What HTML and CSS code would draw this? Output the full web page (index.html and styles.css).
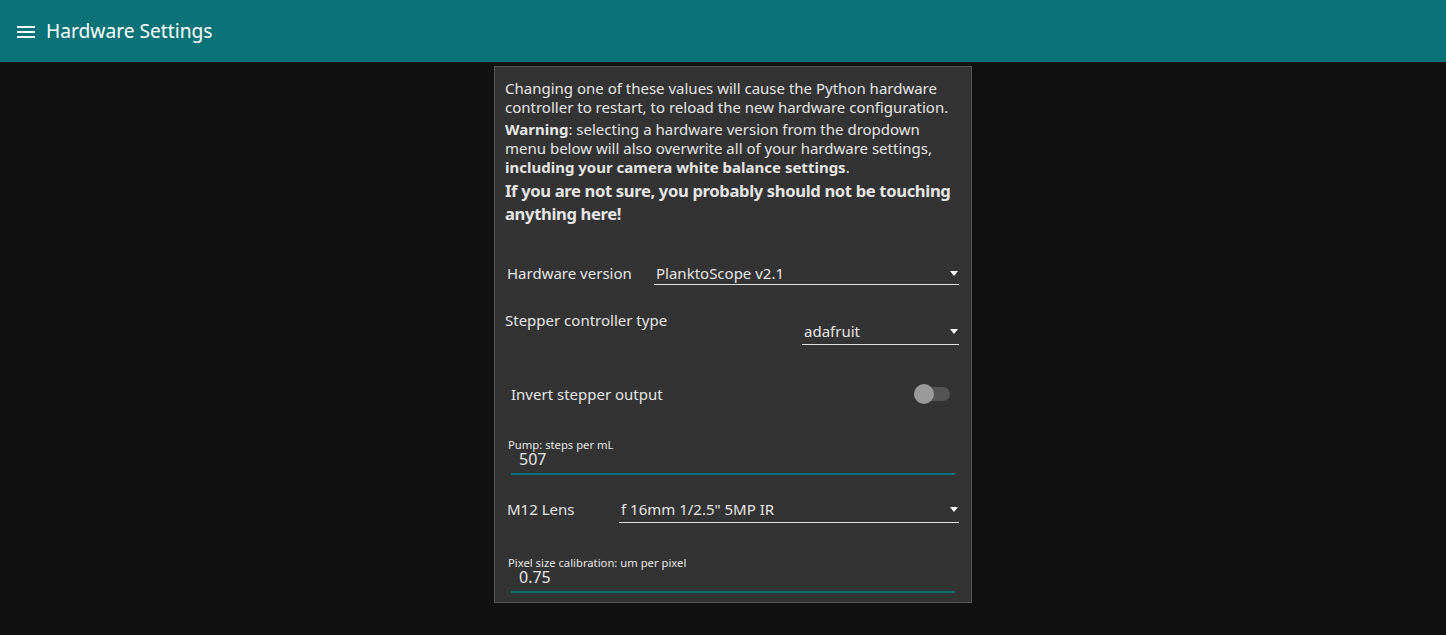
FILE: index.html
```html
<!DOCTYPE html>
<html>
<head>
<meta charset="utf-8">
<link rel="stylesheet" href="styles.css">
</head>
<body>
<header class="topbar">
  <svg class="menu-icon" width="18" height="12" viewBox="0 0 18 12"><rect x="0" y="0" width="18" height="2" fill="#fff"/><rect x="0" y="5" width="18" height="2" fill="#fff"/><rect x="0" y="10" width="18" height="2" fill="#fff"/></svg>
  <span class="title">Hardware Settings</span>
</header>
<main class="main">
  <section class="card">
    <div class="desc">
      <p class="p1">Changing one of these values will cause the Python hardware controller to restart, to reload the new hardware configuration.</p>
      <p class="p2"><b>Warning</b>: selecting a hardware version from the dropdown menu below will also overwrite all of your hardware settings, <b>including your camera white balance settings</b>.</p>
      <p class="p3">If you are not sure, you probably should not be touching anything here!</p>
    </div>

    <div class="row row-hw">
      <span class="label label-hw">Hardware version</span>
      <div class="select select-hw"><span class="sel-text">PlanktoScope v2.1</span><span class="caret"></span></div>
    </div>

    <div class="row row-stepper">
      <span class="label">Stepper controller type</span>
      <div class="select select-stepper"><span class="sel-text">adafruit</span><span class="caret"></span></div>
    </div>

    <div class="row row-invert">
      <span class="label">Invert stepper output</span>
      <span class="switch"><span class="track"></span><span class="thumb"></span></span>
    </div>

    <div class="field field-pump">
      <div class="field-label">Pump: steps per mL</div>
      <div class="field-input"><span class="field-value">507</span></div>
    </div>

    <div class="row row-lens">
      <span class="label label-hw">M12 Lens</span>
      <div class="select select-lens"><span class="sel-text">f 16mm 1/2.5" 5MP IR</span><span class="caret"></span></div>
    </div>

    <div class="field field-pixel">
      <div class="field-label">Pixel size calibration: um per pixel</div>
      <div class="field-input"><span class="field-value">0.75</span></div>
    </div>
  </section>
</main>
</body>
</html>
```

FILE: styles.css
```css
* { box-sizing: border-box; }
html, body { margin: 0; padding: 0; }
body {
  background: #111111;
  font-family: "Noto Sans", "Open Sans", sans-serif;
  color: #e6e6e6;
  height: 635px;
  overflow: hidden;
}
.topbar {
  height: 62px;
  background: #0a7378;
  display: flex;
  align-items: center;
  padding-left: 17px;
}
.menu-icon { display: block; margin-top: 1px; }
.title {
  color: #ffffff;
  font-size: 19.2px;
  margin-left: 11px;
  line-height: 24px;
}
.main {
  padding-top: 4px;
  padding-left: 494px;
}
.card {
  width: 478px;
  background: #333333;
  border: 1px solid #555555;
  padding: 12px 12px 9px 10px;
}
.desc p { margin: 0; }
.desc .p1, .desc .p2 { font-size: 15px; line-height: 19px; }
.desc .p2 { margin-top: 3px; }
.desc .p3 { font-size: 16.6px; letter-spacing: -0.35px; line-height: 23px; font-weight: bold; margin-top: 2px; }
.desc b { font-weight: bold; }

.row { display: flex; }
.label { font-size: 15px; line-height: 20px; }
.select {
  display: flex;
  align-items: center;
  border-bottom: 1px solid #e0e0e0;
  padding: 5px 1px 1px 2px;
  margin-left: auto;
  font-size: 15px;
}
.sel-text { line-height: 20px; flex: 1; }
.caret {
  width: 0; height: 0;
  border-left: 4px solid transparent;
  border-right: 4px solid transparent;
  border-top: 5px solid #ffffff;
  margin-top: 1px;
}
.row-hw { margin-top: 33px; align-items: flex-start; }
.label-hw { margin-left: 2px; padding-top: 5px; }
.select-hw { width: 305px; }
.row-stepper { margin-top: 25px; align-items: flex-start; }
.select-stepper { width: 157px; margin-top: 6px; padding-bottom: 3px; }
.row-invert { margin-top: 39px; padding: 0 9px 0 6px; align-items: center; }
.switch { margin-left: auto; position: relative; width: 36px; height: 20px; display: block; }
.track {
  position: absolute; left: 0; top: 3px;
  width: 36px; height: 14px; border-radius: 7px;
  background: #545454;
}
.thumb {
  position: absolute; left: 0; top: 0;
  width: 20px; height: 20px; border-radius: 50%;
  background: #9a9a9a;
}
.field { margin-left: 3px; margin-right: 4px; }
.field-pump { margin-top: 35px; }
.field-label { font-size: 11.25px; line-height: 12px; color: #e6e6e6; }
.field-input {
  margin-left: 3px;
  border-bottom: 2px solid #0a7378;
  padding: 0 0 6px 8px;
}
.field-value { font-size: 16px; line-height: 16px; display: block; }
.row-lens { margin-top: 19px; align-items: flex-start; }
.select-lens { width: 340px; padding-bottom: 3px; }
.field-pixel { margin-top: 34px; }
```
